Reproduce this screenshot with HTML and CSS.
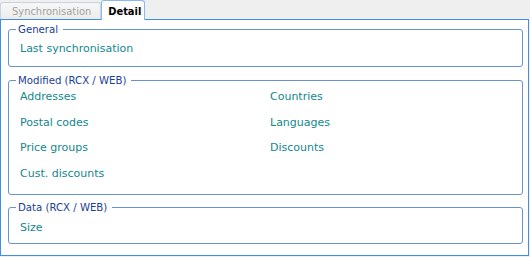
FILE: index.html
```html
<!DOCTYPE html>
<html lang="en">
<head>
    <meta charset="UTF-8">
    <title>Detail</title>
    <link rel="stylesheet" href="styles.css">
</head>
<body>
    <div class="tabs">
        <div class="tab">Synchronisation</div>
        <div class="tab active">Detail</div>
    </div>

    <div class="panel">
        <fieldset class="group general">
            <legend>General</legend>
            <div class="fields">
                <span>Last synchronisation</span>
            </div>
        </fieldset>

        <fieldset class="group modified">
            <legend>Modified (RCX / WEB)</legend>
            <div class="fields two-cols">
                <span>Addresses</span>
                <span>Countries</span>
                <span>Postal codes</span>
                <span>Languages</span>
                <span>Price groups</span>
                <span>Discounts</span>
                <span>Cust. discounts</span>
            </div>
        </fieldset>

        <fieldset class="group data">
            <legend>Data (RCX / WEB)</legend>
            <div class="fields">
                <span>Size</span>
            </div>
        </fieldset>
    </div>
</body>
</html>
```

FILE: styles.css
```css
/* Detail tab */
* { margin: 0; padding: 0; box-sizing: border-box; }
body { background: #efefef; font-family: "DejaVu Sans", Verdana, sans-serif; font-size: 11px; line-height: 13px; }

.tabs { display: flex; align-items: flex-end; height: 19px; width: 529px; }
.tab { font-family: "DejaVu Sans Condensed", "DejaVu Sans", sans-serif; font-stretch: condensed; height: 17px; padding: 2px 9px 0 11px; color: #a3a3a3; background: linear-gradient(#f7f7f7, #ececec); border: 1px solid #c5d3e4; border-bottom: none; border-radius: 3px 3px 0 0; }
.tab.active { position: relative; z-index: 1; height: 20px; margin-bottom: -1px; padding: 4px 3px 0 6px; color: #000; font-weight: bold; background: #fff; border-color: #8db8ec; }

.panel { width: 529px; height: 237px; background: #fff; border: 1px solid #3f8fe6; padding: 3px 5px 0 7px; }

.group { border: 1px solid #6893d3; border-radius: 3px; padding: 0 5px 0 7px; }
.group legend { font-family: "DejaVu Sans Condensed", "DejaVu Sans", sans-serif; font-stretch: condensed; font-size: 11.3px; color: #203f96; padding: 0 5px 0 2px; line-height: 13px; }

.fields { padding-left: 4px; color: #14878c; }
.two-cols { display: grid; grid-template-columns: 250px 1fr; row-gap: 12.5px; }

.general .fields { padding-top: 6px; padding-bottom: 11px; }
.modified { margin-top: 7px; }
.modified .fields { padding-top: 3px; padding-bottom: 14px; }
.data { margin-top: 6px; }
.data .fields { padding-top: 7px; padding-bottom: 9px; }
```
